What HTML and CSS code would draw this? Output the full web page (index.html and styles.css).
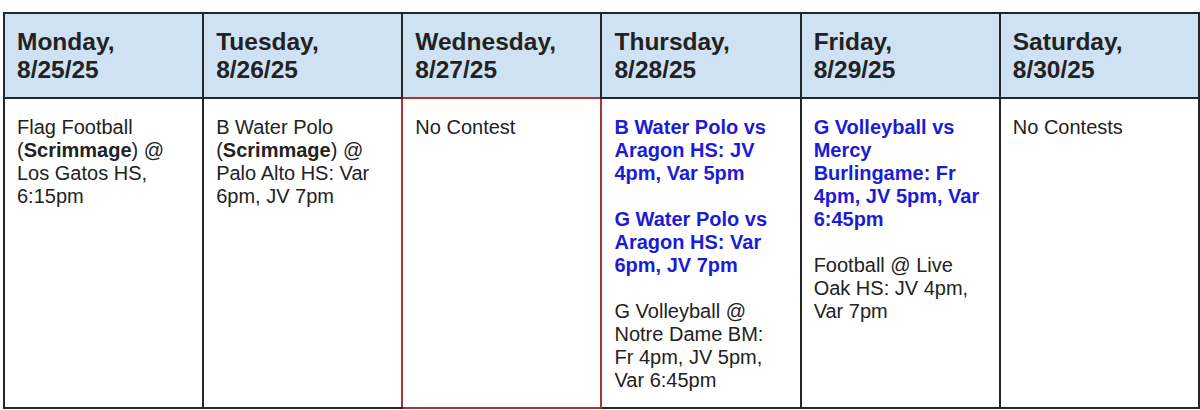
FILE: index.html
```html
<!DOCTYPE html>
<html lang="en">
<head>
<meta charset="utf-8">
<title>Week Schedule</title>
<link rel="stylesheet" href="styles.css">
</head>
<body>
<table class="schedule">
  <thead>
    <tr>
      <th class="day">Monday,<br>8/25/25</th>
      <th class="day">Tuesday,<br>8/26/25</th>
      <th class="day day-flag">Wednesday,<br>8/27/25</th>
      <th class="day">Thursday,<br>8/28/25</th>
      <th class="day">Friday,<br>8/29/25</th>
      <th class="day">Saturday,<br>8/30/25</th>
    </tr>
  </thead>
  <tbody>
    <tr>
      <td class="cell">
        <p>Flag Football (<b>Scrimmage</b>) @ Los Gatos HS, 6:15pm</p>
      </td>
      <td class="cell cell-before-flag">
        <p>B Water Polo (<b>Scrimmage</b>) @ Palo Alto HS: Var 6pm, JV 7pm</p>
      </td>
      <td class="cell cell-flag">
        <p>No Contest</p>
      </td>
      <td class="cell">
        <p class="home">B Water Polo vs Aragon HS: JV 4pm, Var 5pm</p>
        <p class="home">G Water Polo vs Aragon HS: Var 6pm, JV 7pm</p>
        <p>G Volleyball @ Notre Dame BM: Fr 4pm, JV 5pm, Var 6:45pm</p>
      </td>
      <td class="cell">
        <p class="home">G Volleyball vs Mercy Burlingame: Fr 4pm, JV 5pm, Var 6:45pm</p>
        <p>Football @ Live Oak HS: JV 4pm, Var 7pm</p>
      </td>
      <td class="cell">
        <p>No Contests</p>
      </td>
    </tr>
  </tbody>
</table>
</body>
</html>
```

FILE: styles.css
```css
html, body {
  margin: 0;
  padding: 0;
  background: #ffffff;
}

body {
  font-family: "Liberation Sans", Arial, sans-serif;
  color: #222222;
}

.schedule {
  border-collapse: collapse;
  table-layout: fixed;
  width: 1197px;
  margin: 12px 0 0 3px;
}

.day,
.cell {
  border: 2px solid #262626;
  text-align: left;
  vertical-align: top;
}

.day {
  background: #cfe2f3;
  font-size: 24.5px;
  line-height: 28px;
  font-weight: bold;
  padding: 14px 12px 13px 12px;
}

.day-flag {
  border-bottom-style: none;
}

.cell {
  font-size: 20px;
  line-height: 23px;
  padding: 17px 12px 15px 12px;
}

.cell-before-flag {
  border-right-style: none;
}

.cell-flag {
  border: 2px solid #a83434;
}

.cell p {
  margin: 0;
}

.cell p + p {
  margin-top: 23px;
}

.home {
  color: #1c1cd6;
  font-weight: bold;
}
```
